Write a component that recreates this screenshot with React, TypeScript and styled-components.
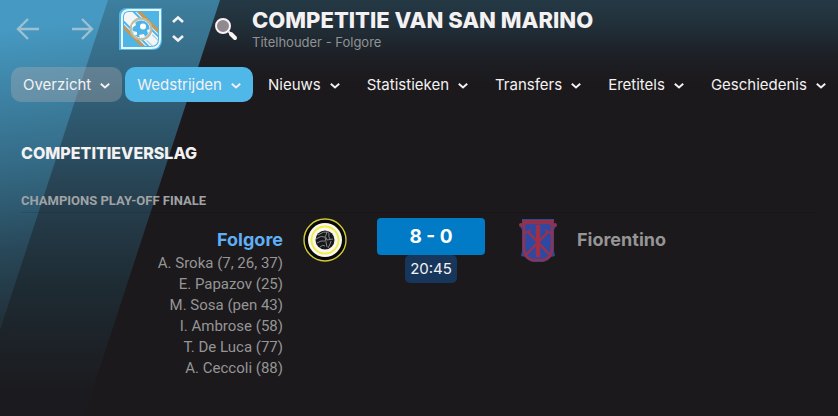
import React from 'react';
import styled, { createGlobalStyle } from 'styled-components';

const GlobalStyle = createGlobalStyle`
  * { box-sizing: border-box; }
  html, body, #root { height: 100%; }
  body {
    margin: 0;
    background: #1b191c;
    color: #f4f1f2;
    font-family: Inter, "Liberation Sans", sans-serif;
  }
  h1, h2, h3, p, ul { margin: 0; padding: 0; }
  button { font: inherit; color: inherit; border: 0; background: none; padding: 0; cursor: pointer; }
  a { color: inherit; text-decoration: none; }
`;

const Page = styled.div`
  position: relative;
  isolation: isolate;
  min-height: 100%;
  overflow: hidden;
  background: linear-gradient(#243945 0, #22313b 22px, #1d2026 54px, #1b191c 84px);
`;

const Band = styled.div<{ $front?: boolean }>`
  position: absolute;
  inset: 0;
  z-index: -1;
  background: ${p => p.$front
    ? 'linear-gradient(174deg, #4699c2 30px, #3e84a6 90px, #336781 175px, #284859 250px, #1f2a32 340px, #1b1d21 405px)'
    : 'linear-gradient(#3d7f9f 0, #376f8b 50px, #2d566c 125px, #263f4e 200px, #1e2b33 285px, #1b1b1f 390px)'};
  clip-path: ${p => p.$front
    ? 'polygon(0 0, 108px 0, 0 330px)'
    : 'polygon(0 0, 220px 0, 82px 422px, 0 422px)'};
`;

const Header = styled.header`
  display: flex;
  align-items: center;
  height: 58px;
  padding-left: 15px;
`;

const HistoryNav = styled.nav`
  display: flex;
  gap: 31px;
  margin-right: 25px;
  color: #9bc0d2;
`;

const IconButton = styled.button`
  display: flex;
`;

const Stepper = styled.div`
  display: flex;
  flex-direction: column;
  gap: 8px;
  margin: 0 30px 0 9px;
`;

const Heading = styled.div`
  margin-left: 14px;
  padding-top: 2px;
`;

const Title = styled.h1`
  font-size: 22px;
  line-height: 24px;
  font-weight: 800;
  white-space: nowrap;
`;

const Subtitle = styled.p`
  font-size: 13px;
  line-height: 20px;
  color: #8f9396;
`;

const Tabs = styled.nav`
  display: flex;
  gap: 3px;
  padding: 9px 0 0 11px;
`;

const Tab = styled.button<{ $tone?: 'soft' | 'active' }>`
  display: flex;
  flex: none;
  align-items: center;
  gap: 9px;
  height: 35px;
  padding: 0 12px;
  border-radius: 10px;
  font-size: 15px;
  background: ${p => p.$tone === 'active' ? '#50b7e9' : p.$tone === 'soft' ? 'rgba(183, 175, 180, 0.34)' : 'none'};
`;

const Report = styled.main`
  padding: 40px 21px;
`;

const ReportTitle = styled.h2`
  font-size: 16px;
  line-height: 22px;
  font-weight: 800;
`;

const Stage = styled.h3`
  margin-top: 26px;
  font-family: Roboto, sans-serif;
  font-size: 13px;
  line-height: 22px;
  font-weight: 700;
  color: #a0a3a6;
  border-bottom: 1px solid rgba(0, 0, 0, 0.1);
`;

const MatchRow = styled.section`
  display: grid;
  grid-template-columns: 262px 94px 108px 92px 1fr;
  align-items: start;
  margin-top: 5px;
`;

const Crest = styled.div<{ $away?: boolean }>`
  display: flex;
  padding-left: ${p => p.$away ? '31px' : '20px'};
`;

const Team = styled.div<{ $home?: boolean }>`
  padding-top: 9px;
  text-align: ${p => p.$home ? 'right' : 'left'};
`;

const TeamLink = styled.a<{ $won?: boolean }>`
  display: block;
  font-size: 18px;
  line-height: 26px;
  font-weight: 700;
  color: ${p => p.$won ? '#60aff5' : '#969595'};
`;

const Scorers = styled.ul`
  list-style: none;
  font-family: Roboto, sans-serif;
  font-size: 15px;
  line-height: 21px;
  color: #969595;
`;

const Result = styled.div`
  display: flex;
  flex-direction: column;
  align-items: center;
`;

const Score = styled.strong`
  width: 100%;
  border-radius: 4px;
  background: #027bc6;
  font-size: 19px;
  line-height: 37px;
  text-align: center;
  color: #fff;
`;

const Kickoff = styled.time`
  padding: 0 5px;
  border-radius: 5px;
  background: #17365c;
  font-size: 15px;
  line-height: 28px;
`;

const Arrow = ({ back }: { back?: boolean }) => (
  <svg width="24" height="24" viewBox="0 0 24 24" fill="none" stroke="currentColor" strokeWidth="2.4">
    <path d={back ? 'M24 12H3M13 2L3 12l10 10' : 'M2 12h20M12 2l10 10-10 10'} />
  </svg>
);

const Chevron = ({ wide, up }: { wide?: boolean; up?: boolean }) => (
  <svg width={wide ? 12 : 10} height={wide ? 11 : 10} viewBox={wide ? '0 0 12 11' : '0 0 10 10'} fill="none" stroke="currentColor" strokeWidth={wide ? 2.6 : 2}>
    <path d={wide ? (up ? 'M1 8l5-4.500 5 4.500' : 'M1 3l5 4.500 5-4.500') : 'M.8 3.800l4.200 3.700 4.200-3.700'} />
  </svg>
);

const LeagueBadge = () => (
  <svg width="44" height="44" viewBox="0 0 44 44" role="img" aria-label="Competitie van San Marino">
    <defs>
      <clipPath id="league-field"><path d="M5 10q0-5 5-5h29v27q0 7-7 7H5z" /></clipPath>
    </defs>
    <path d="M0 9q0-8 8-8h35v32q0 10-10 10H0z" fill="#50b8e8" />
    <path d="M3 10q0-7 7-7h31v29q0 9-9 9H3z" fill="#4fb5e5" stroke="#edf5f8" strokeWidth="2" />
    <g clipPath="url(#league-field)">
      <g transform="rotate(45 22 22)">
        <path d="M-6 16h56v12H-6z" fill="#f3f6f8" />
        <path d="M-6 13.500h56M-6 30.500h56" stroke="#e2edf3" strokeWidth="1.2" />
        <path d="M6 11h32M6 33h32" stroke="#d49342" strokeWidth="2.5" />
        <path d="M34 18h9M34 26h9" stroke="#92cce8" strokeWidth="1" />
      </g>
    </g>
    <circle cx="22" cy="22" r="10.5" fill="#4eb4e5" stroke="#c8b996" strokeWidth="1.8" />
    <circle cx="22" cy="22" r="9" fill="none" stroke="#dceaf0" />
    <circle cx="24" cy="19.500" r="3" fill="#fff" />
    <path d="M13 18l3-3 1 3-4 3zM14 24l4 1v3h-3zM20 28l5-1 1 3-5 1zM28 23l3-1-2 5z" fill="#f7f9fa" />
  </svg>
);

const SearchIcon = () => (
  <svg width="24" height="24" viewBox="0 0 24 24">
    <circle cx="9" cy="9" r="7" fill="#8e8a8f" stroke="#faf2f3" strokeWidth="2" />
    <path d="M14.500 14.500l2 2" stroke="#faf2f3" strokeWidth="2" />
    <path d="M17 17l4 4" stroke="#faf2f3" strokeWidth="4" strokeLinecap="round" />
  </svg>
);

const FolgoreCrest = () => (
  <svg width="44" height="44" viewBox="0 0 44 44" role="img" aria-label="Folgore">
    <circle cx="22" cy="22" r="21" fill="#080808" stroke="#d2cc35" strokeWidth="1.4" />
    <circle cx="22" cy="22" r="17" fill="#f8f8ef" />
    <circle cx="22" cy="22" r="13.5" fill="none" stroke="#f2eb43" strokeWidth="1.8" />
    <circle cx="22" cy="22" r="9.500" fill="#171719" />
    <path d="M15 17q5-4 11-3M13 21q5-4 9-2l2 10M14 25q4-3 8-2M17 29q3-3 5-1M24 14q-3 5 0 8l6-1M26 15q-1 4 1 6M28 23q-1 4-3 7" fill="none" stroke="#929295" strokeWidth=".9" />
  </svg>
);

const FiorentinoCrest = () => (
  <svg width="44" height="44" viewBox="0 0 44 44" role="img" aria-label="Fiorentino">
    <path d="M6 1h32v5l2 2-2 4v21l1 5-4 1q-3 4-8 5H17q-5-1-8-5l-4-1 1-5V12L4 8l2-2z" fill="#35478f" />
    <path d="M8 5h28v25q0 10-9 12H17Q8 40 8 30z" fill="#2d49a4" stroke="#91334f" strokeWidth="2.6" />
    <path d="M6 3h32" stroke="#91334f" strokeWidth="2" />
    <path d="M22 7v32" stroke="#a13047" strokeWidth="4.500" />
    <path d="M12 14l23 24M32 14L9 38" stroke="#a13047" strokeWidth="2.200" />
    <path d="M9 15l6-3M35 15l-6-3" stroke="#a13047" strokeWidth="1.500" />
    <circle cx="5" cy="7" r="2" fill="#91334f" />
    <circle cx="39" cy="7" r="2" fill="#91334f" />
  </svg>
);

const tabs: { label: string; tone?: 'soft' | 'active' }[] = [
  { label: 'Overzicht', tone: 'soft' },
  { label: 'Wedstrijden', tone: 'active' },
  { label: 'Nieuws' },
  { label: 'Statistieken' },
  { label: 'Transfers' },
  { label: 'Eretitels' },
  { label: 'Geschiedenis' },
];

const scorers = [
  'A. Sroka (7, 26, 37)',
  'E. Papazov (25)',
  'M. Sosa (pen 43)',
  'I. Ambrose (58)',
  'T. De Luca (77)',
  'A. Ceccoli (88)',
];

export default function App() {
  return (
    <>
      <GlobalStyle />
      <Page>
        <Band />
        <Band $front />
        <Header>
          <HistoryNav aria-label="Navigatie">
            <IconButton aria-label="Terug"><Arrow back /></IconButton>
            <IconButton aria-label="Vooruit"><Arrow /></IconButton>
          </HistoryNav>
          <LeagueBadge />
          <Stepper>
            <IconButton aria-label="Vorige competitie"><Chevron wide up /></IconButton>
            <IconButton aria-label="Volgende competitie"><Chevron wide /></IconButton>
          </Stepper>
          <IconButton aria-label="Zoeken"><SearchIcon /></IconButton>
          <Heading>
            <Title>COMPETITIE VAN SAN MARINO</Title>
            <Subtitle>Titelhouder - Folgore</Subtitle>
          </Heading>
        </Header>
        <Tabs aria-label="Competitie">
          {tabs.map(tab => (
            <Tab key={tab.label} $tone={tab.tone}>
              {tab.label}
              <Chevron />
            </Tab>
          ))}
        </Tabs>
        <Report>
          <ReportTitle>COMPETITIEVERSLAG</ReportTitle>
          <Stage>CHAMPIONS PLAY-OFF FINALE</Stage>
          <MatchRow>
            <Team $home>
              <TeamLink href="#folgore" $won>Folgore</TeamLink>
              <Scorers>
                {scorers.map(name => <li key={name}>{name}</li>)}
              </Scorers>
            </Team>
            <Crest><FolgoreCrest /></Crest>
            <Result>
              <Score>8 - 0</Score>
              <Kickoff>20:45</Kickoff>
            </Result>
            <Crest $away><FiorentinoCrest /></Crest>
            <Team>
              <TeamLink href="#fiorentino">Fiorentino</TeamLink>
            </Team>
          </MatchRow>
        </Report>
      </Page>
    </>
  );
}
